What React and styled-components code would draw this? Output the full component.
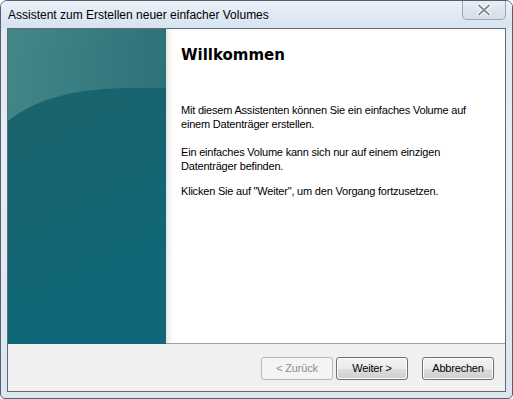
import React from "react";
import styled, { createGlobalStyle } from "styled-components";

const GlobalStyle = createGlobalStyle`
  html, body {
    margin: 0;
    padding: 0;
    background: #ffffff;
  }
  * {
    box-sizing: border-box;
  }
`;

const SidePicture = () => (
  <svg width="158" height="315" viewBox="0 0 158 315" preserveAspectRatio="none">
    <defs>
      <linearGradient id="topTeal" x1="0" y1="0" x2="1" y2="0.3">
        <stop offset="0" stopColor="#438789" />
        <stop offset="1" stopColor="#2b7176" />
      </linearGradient>
      <linearGradient id="lowTeal" x1="0" y1="0" x2="0.3" y2="1">
        <stop offset="0" stopColor="#1a636c" />
        <stop offset="0.5" stopColor="#146571" />
        <stop offset="1" stopColor="#0f6779" />
      </linearGradient>
    </defs>
    <rect width="158" height="315" fill="url(#topTeal)" />
    <path d="M0 92 C 30 68, 70 60, 120 59 L 158 59 L 158 315 L 0 315 Z" fill="url(#lowTeal)" />
  </svg>
);

const App = () => {
  return (
    <>
      <GlobalStyle />
      <Window>
        <TitleBar>
          <Title>Assistent zum Erstellen neuer einfacher Volumes</Title>
          <CloseButton>
            <svg width="16" height="12" viewBox="0 0 16 12">
              <path
                d="M3 1.5 L13 10.5 M13 1.5 L3 10.5"
                stroke="#ffffff"
                strokeWidth="4"
                strokeLinecap="round"
              />
              <path
                d="M3 1.5 L13 10.5 M13 1.5 L3 10.5"
                stroke="#8a9096"
                strokeWidth="2"
                strokeLinecap="round"
              />
            </svg>
          </CloseButton>
        </TitleBar>
        <Client>
          <Main>
            <Side>
              <SidePicture />
            </Side>
            <Content>
              <Heading>Willkommen</Heading>
              <Paragraph $gap={14}>
                Mit diesem Assistenten können Sie ein einfaches Volume auf
                <br />
                einem Datenträger erstellen.
              </Paragraph>
              <Paragraph $gap={11}>
                Ein einfaches Volume kann sich nur auf einem einzigen
                <br />
                Datenträger befinden.
              </Paragraph>
              <Paragraph>
                Klicken Sie auf "Weiter", um den Vorgang fortzusetzen.
              </Paragraph>
            </Content>
          </Main>
          <Footer>
            <Button disabled>&lt; Zurück</Button>
            <Button>Weiter &gt;</Button>
            <Button $spaced>Abbrechen</Button>
          </Footer>
        </Client>
      </Window>
    </>
  );
};

export default App;

const Window = styled.div`
  width: 513px;
  height: 399px;
  display: flex;
  flex-direction: column;
  border: 1px solid #55606b;
  border-radius: 7px 7px 5px 5px;
  background: linear-gradient(180deg, #dfe9f4 0%, #e6eef7 40%, #dbe6f1 100%);
  overflow: hidden;
`;

const TitleBar = styled.div`
  height: 27px;
  display: flex;
  align-items: flex-start;
  justify-content: space-between;
  padding-left: 7px;
  padding-right: 6px;
  background: linear-gradient(180deg, #eaf1f8 0%, #d6e3f0 100%);
`;

const Title = styled.div`
  font-family: "Liberation Sans", Arial, sans-serif;
  font-size: 12px;
  color: #000000;
  padding-top: 7px;
  white-space: nowrap;
`;

const CloseButton = styled.div`
  width: 44px;
  height: 19px;
  display: flex;
  align-items: center;
  justify-content: center;
  border: 1px solid #9aa5b0;
  border-top: none;
  border-radius: 0 0 5px 5px;
  background: linear-gradient(180deg, #e9eff5 0%, #dde6ef 50%, #d3dee9 100%);
`;

const Client = styled.div`
  flex: 1;
  margin: 0 6px 6px 6px;
  display: flex;
  flex-direction: column;
  border: 1px solid #636a70;
  background: #f0f0f0;
`;

const Main = styled.div`
  height: 315px;
  display: flex;
  border-bottom: 1px solid #a0a0a0;
`;

const Side = styled.div`
  width: 158px;
  flex-shrink: 0;
  line-height: 0;
`;

const Content = styled.div`
  flex: 1;
  background: linear-gradient(90deg, #e4e4e4 0px, #f7f7f7 4px, #ffffff 8px);
  padding: 17px 15px 0 15px;
  font-family: "Liberation Sans", Tahoma, Arial, sans-serif;
  font-size: 11px;
  color: #000000;
`;

const Heading = styled.div`
  font-family: "DejaVu Sans", Verdana, sans-serif;
  font-weight: bold;
  font-size: 15px;
  line-height: 18px;
  margin-bottom: 39px;
`;

const Paragraph = styled.p`
  margin: 0 0 ${(p) => p.$gap || 0}px 0;
  line-height: 14px;
  letter-spacing: -0.2px;
`;

const Footer = styled.div`
  flex: 1;
  display: flex;
  align-items: center;
  justify-content: flex-end;
  gap: 3px;
  padding: 1px 11px 0 0;
`;

const Button = styled.button`
  width: 72px;
  height: 23px;
  margin-left: ${(p) => (p.$spaced ? "11px" : "0")};
  font-family: "Liberation Sans", Tahoma, Arial, sans-serif;
  font-size: 11px;
  letter-spacing: -0.2px;
  color: ${(p) => (p.disabled ? "#8d8d8d" : "#000000")};
  border: 1px solid ${(p) => (p.disabled ? "#b5b9bc" : "#707070")};
  border-radius: 3px;
  padding: 0;
  background: ${(p) =>
    p.disabled
      ? "#f4f4f4"
      : "linear-gradient(180deg, #f2f2f2 0%, #ebebeb 50%, #dddddd 51%, #cfcfcf 100%)"};
  box-shadow: inset 0 0 0 1px ${(p) => (p.disabled ? "#f4f4f4" : "#fcfcfc")};
`;
